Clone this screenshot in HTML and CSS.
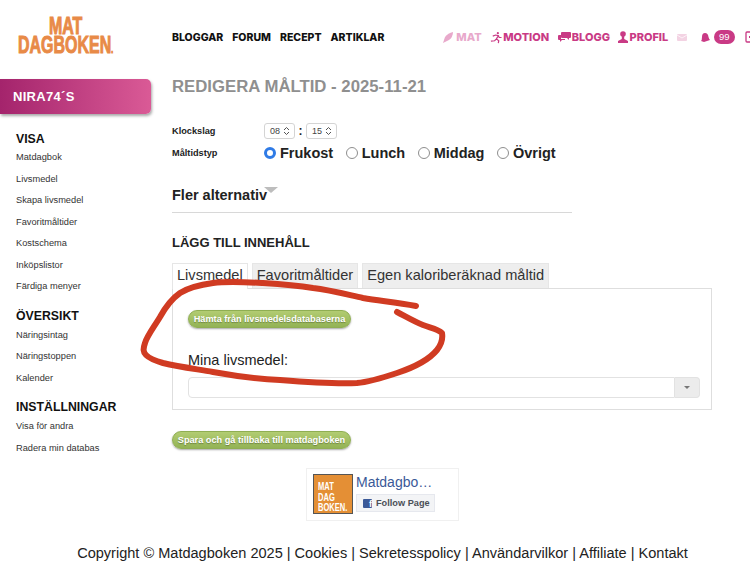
FILE: index.html
```html
<!DOCTYPE html>
<html lang="sv">
<head>
  <meta charset="UTF-8" />
  <meta name="viewport" content="width=device-width, initial-scale=1" />
  <title>Matdagboken - Redigera måltid</title>
  <link rel="stylesheet" href="styles.css">
</head>
<body>

  <div class="page">
    <div class="header">
      <div class="logo">
        <div class="logo-text">MAT<br>DAGBOKEN<span class="logo-dot">.</span></div>
      </div>
      <div class="main-nav">
        <a>BLOGGAR</a>
        <a>FORUM</a>
        <a>RECEPT</a>
        <a>ARTIKLAR</a>
      </div>
      <div class="user-nav">
        <a class="faded">
          <svg width="13" height="13" viewBox="0 0 13 13"><path d="M1 12 L3 6 Q6 2 11 1 Q11 6 7 9 Z" fill="currentColor"/></svg>MAT
        </a>
        <a>
          <svg width="12" height="13" viewBox="0 0 13 13" fill="none" stroke="currentColor" stroke-width="1.3"><circle cx="8.5" cy="1.8" r="1.2" fill="currentColor" stroke="none"/><path d="M3 5 L6 3.8 L9 4.5 L7 8 L9.5 10 L9 12.5 M7 8 L5 10 L1 10.5 M9 4.5 L10 6.5 L12.5 6.5"/></svg>MOTION
        </a>
        <a>
          <svg width="13" height="12" viewBox="0 0 13 12"><path d="M4 1 H12 Q13 1 13 2 V6 Q13 7 12 7 H11 L11 9 L9 7 H4 Q3 7 3 6 V2 Q3 1 4 1 Z" fill="currentColor"/><path d="M1 4 H3 V8 H7 V9 H4 L2 11 V9 H1 Q0 9 0 8 V5 Q0 4 1 4 Z" fill="currentColor"/></svg>BLOGG
        </a>
        <a>
          <svg width="10" height="12" viewBox="0 0 10 12"><circle cx="5" cy="3" r="2.8" fill="currentColor"/><path d="M3.8 5 H6.2 V8 L10 10 V12 H0 V10 L3.8 8 Z" fill="currentColor"/></svg>PROFIL
        </a>
        <svg class="mail-icon" width="10" height="7" viewBox="0 0 10 7"><rect width="10" height="7" rx="1" fill="#f3d3e3"/><path d="M0 1 L5 4 L10 1" fill="none" stroke="#fff" stroke-width="0.7"/></svg>
        <svg class="bell-icon" width="10" height="11" viewBox="0 0 10 11"><path d="M1 9 Q2 8 2 5 Q2 1 5 1 Q8 1 8.5 5 Q9 7 10 8 L4 10 Z" fill="#c93a85"/></svg>
        <span class="badge">99</span>
        <svg class="exit-icon" width="12" height="12" viewBox="0 0 12 12"><rect x="1" y="1" width="10" height="10" rx="1" fill="none" stroke="#c93a85" stroke-width="1.3"/><rect x="4" y="5" width="4" height="2" fill="#c93a85"/></svg>
      </div>
    </div>

    <div class="content">
      <div class="sidebar">
        <div class="user-band">NIRA74´S</div>
        <div class="side-menu">
          <h3>VISA</h3>
          <a>Matdagbok</a>
          <a>Livsmedel</a>
          <a>Skapa livsmedel</a>
          <a>Favoritmåltider</a>
          <a>Kostschema</a>
          <a>Inköpslistor</a>
          <a>Färdiga menyer</a>
          <h3>ÖVERSIKT</h3>
          <a>Näringsintag</a>
          <a>Näringstoppen</a>
          <a>Kalender</a>
          <h3>INSTÄLLNINGAR</h3>
          <a>Visa för andra</a>
          <a>Radera min databas</a>
        </div>
      </div>

      <div class="main">
        <h1>REDIGERA MÅLTID - 2025-11-21</h1>

        <div class="form-row time-row">
          <label class="row-label">Klockslag</label>
          <span class="time-box">08<svg width="7" height="10" viewBox="0 0 7 10" fill="none" stroke="#555" stroke-width="1"><path d="M1 4 L3.5 1.5 L6 4 M1 6 L3.5 8.5 L6 6"/></svg></span>
          <span class="time-sep">:</span>
          <span class="time-box">15<svg width="7" height="10" viewBox="0 0 7 10" fill="none" stroke="#555" stroke-width="1"><path d="M1 4 L3.5 1.5 L6 4 M1 6 L3.5 8.5 L6 6"/></svg></span>
        </div>

        <div class="form-row meal-row">
          <label class="row-label">Måltidstyp</label>
          <label class="radio"><input type="radio" name="meal" checked>Frukost</label>
          <label class="radio"><input type="radio" name="meal">Lunch</label>
          <label class="radio"><input type="radio" name="meal">Middag</label>
          <label class="radio"><input type="radio" name="meal">Övrigt</label>
        </div>

        <div class="more-options">
          <h2>Fler alternativ</h2><span class="more-arrow"></span>
        </div>

        <h4>LÄGG TILL INNEHÅLL</h4>

        <div class="tabs">
          <span class="tab active">Livsmedel</span>
          <span class="tab">Favoritmåltider</span>
          <span class="tab">Egen kaloriberäknad måltid</span>
        </div>
        <div class="tab-panel">
          <button class="green-btn small">Hämta från livsmedelsdatabaserna</button>
          <div class="field-label">Mina livsmedel:</div>
          <div class="combo">
            <div class="combo-input"></div>
            <div class="combo-btn"><span class="combo-arrow"></span></div>
          </div>
        </div>

        <button class="green-btn save">Spara och gå tillbaka till matdagboken</button>

        <div class="fb-wrap">
          <div class="fb-box">
            <div class="fb-logo"><div class="fb-logo-text">MAT<br>DAG<br>BOKEN.</div></div>
            <div class="fb-info">
              <div class="fb-name">Matdagbo…</div>
              <div class="fb-follow"><span class="fb-icon">f</span>Follow Page</div>
            </div>
          </div>
        </div>
      </div>
    </div>

    <div class="footer">Copyright © Matdagboken 2025 | Cookies | Sekretesspolicy | Användarvilkor | Affiliate | Kontakt</div>
  </div>

  <svg class="scribble" width="750" height="579" viewBox="0 0 750 579">
    <path d="M416 306 C395 302 380 301 363 298 C345 294 330 290 313 288 C295 285 280 284 263 283 C245 282 228 281 213 283 C198 285 188 288 180 293 C170 300 165 308 160 317 C154 327 147 336 145 343 C143 349 143 352 146 355 C150 359 156 361 163 363 C180 367 196 369 213 372 C235 376 258 379 280 380 C305 382 335 384 357 383 C370 382 382 378 397 373 C412 368 428 361 437 350 C441 345 443 339 442 333 C438 329 431 328 423 325 C413 321 405 316 397 312" fill="none" stroke="#d03b22" stroke-width="6" stroke-linecap="round" stroke-linejoin="round"/>
  </svg>

</body>
</html>
```

FILE: styles.css
```css
html, body {
  margin: 0;
  padding: 0;
  background-color: #fff;
  font-family: "Liberation Sans", Arial, sans-serif;
  color: #222;
  overflow: hidden;
}
.page {
  width: 750px;
  height: 579px;
  overflow: hidden;
}
.scribble {
  position: absolute;
  left: 0;
  top: 0;
  z-index: 5;
  pointer-events: none;
}

/* header */
.header {
  display: flex;
  align-items: flex-start;
  height: 79px;
}
.logo {
  width: 172px;
  flex: none;
  padding: 17px 0 0 18px;
  box-sizing: border-box;
}
.logo-text {
  font-size: 23.5px;
  font-weight: 700;
  line-height: 19px;
  color: #e88a47;
  width: 140px;
  text-align: center;
  white-space: nowrap;
  -webkit-text-stroke: 1px #e88a47;
  transform: scaleX(0.68);
  transform-origin: left top;
}
.logo-dot {
  font-size: 10px;
}
.main-nav {
  display: flex;
  gap: 9px;
  flex: none;
  padding-top: 31px;
}
.main-nav a {
  font-family: Inter, sans-serif;
  font-size: 10.5px;
  font-weight: 800;
  line-height: 14px;
  color: #111;
}
.user-nav {
  display: flex;
  align-items: center;
  flex: none;
  margin-left: 58px;
  padding-top: 29px;
  height: 16px;
  color: #c93a85;
}
.user-nav a {
  display: flex;
  align-items: center;
  gap: 1px;
  margin-right: 8.5px;
  font-family: Inter, sans-serif;
  font-size: 11px;
  font-weight: 800;
}
.user-nav a.faded {
  color: #e8a9cb;
}
.mail-icon {
  margin-right: 13px;
}
.bell-icon {
  margin-right: 4px;
}
.badge {
  width: 21px;
  height: 14px;
  border-radius: 7px;
  background: #c93a85;
  color: #fff;
  font-size: 9.5px;
  line-height: 14px;
  text-align: center;
  margin-right: 10px;
}
.exit-icon {
  flex: none;
}

/* sidebar */
.content {
  display: flex;
  height: 442px;
}
.sidebar {
  width: 172px;
  flex: none;
}
.user-band {
  width: 151px;
  height: 35px;
  box-sizing: border-box;
  padding-left: 13px;
  line-height: 35px;
  font-size: 13px;
  font-weight: 700;
  color: #fff;
  letter-spacing: 0.3px;
  background: linear-gradient(to right, #a4246c, #da5a96);
  border-radius: 0 5px 5px 0;
  box-shadow: 1px 2px 3px rgba(0, 0, 0, 0.35);
}
.side-menu {
  padding: 17px 0 0 16px;
}
.side-menu h3 {
  margin: 0;
  font-size: 12.3px;
  line-height: 16px;
  color: #111;
}
.side-menu h3 ~ h3 {
  margin-top: 15.5px;
}
.side-menu a {
  display: block;
  font-size: 9.25px;
  line-height: 12px;
  color: #333;
  margin-bottom: 9.5px;
  margin-top: 0;
}
.side-menu h3 + a {
  margin-top: 4px;
}
.side-menu h3 ~ h3 + a {
  margin-top: 5px;
}

/* main column */
.main {
  flex: 1;
  min-width: 0;
}
h1 {
  margin: 0;
  font-size: 16.75px;
  line-height: 15px;
  color: #8f8f8f;
}
.form-row {
  display: flex;
  align-items: center;
}
.row-label {
  width: 92px;
  flex: none;
  font-size: 9.2px;
  font-weight: 700;
  color: #222;
}
.time-row {
  margin-top: 28px;
  height: 17px;
}
.time-box {
  display: inline-flex;
  align-items: center;
  gap: 3px;
  height: 14px;
  padding: 0 4px 0 5px;
  border: 1px solid #d4d4d4;
  border-radius: 3px;
  font-size: 9px;
  color: #444;
}
.time-sep {
  width: 11px;
  text-align: center;
  font-size: 12px;
  font-weight: 700;
}
.meal-row {
  margin-top: 5px;
  height: 17px;
}
.radio {
  display: flex;
  align-items: center;
  gap: 4px;
  margin-right: 12.5px;
  font-size: 14.5px;
  font-weight: 700;
  color: #222;
}
.radio input {
  appearance: none;
  margin: 0;
  width: 12px;
  height: 12px;
  border: 1px solid #8e8e8e;
  border-radius: 50%;
  background: #fff;
  box-sizing: border-box;
}
.radio input:checked {
  border: 3.5px solid #2f7be6;
}
.more-options {
  display: flex;
  width: 400px;
  height: 25px;
  margin-top: 25px;
  padding-top: 1px;
  box-sizing: content-box;
  border-bottom: 1px solid #d8d8d8;
}
.more-options h2 {
  margin: 0;
  font-size: 14.5px;
  line-height: 17px;
  color: #222;
}
.more-arrow {
  width: 0;
  height: 0;
  margin: 0 0 0 -3px;
  border-left: 7px solid transparent;
  border-right: 7px solid transparent;
  border-top: 6px solid #bdbdbd;
}
h4 {
  margin: 22px 0 0;
  font-size: 13px;
  line-height: 15px;
  color: #222;
}

/* tabs */
.tabs {
  display: flex;
  gap: 4px;
  margin-top: 13px;
  position: relative;
  z-index: 1;
}
.tab {
  height: 24px;
  padding: 0 4px;
  line-height: 22px;
  font-size: 14.6px;
  color: #333;
  background: #eee;
  border: 1px solid #e6e6e6;
  border-bottom: none;
}
.tab.active {
  background: #fff;
  height: 25px;
  margin-bottom: -1px;
}
.tab-panel {
  width: 540px;
  height: 122px;
  box-sizing: border-box;
  border: 1px solid #dedede;
  padding: 21px 11px 0 15px;
}
.green-btn {
  display: block;
  height: 18px;
  padding: 0;
  border: 1px solid #8fae52;
  border-radius: 9px;
  background: linear-gradient(#b2cc72, #93b355);
  color: #fff;
  font-family: "Liberation Sans", Arial, sans-serif;
  font-size: 9.2px;
  font-weight: 700;
  white-space: nowrap;
  text-shadow: 0 1px 1px rgba(0, 0, 0, 0.3);
  box-shadow: 0 1px 2px rgba(0, 0, 0, 0.35);
}
.green-btn.small {
  width: 163px;
}
.green-btn.save {
  width: 179px;
  margin-top: 21px;
}
.field-label {
  margin-top: 24px;
  font-size: 14.5px;
  line-height: 17px;
  color: #222;
}
.combo {
  display: flex;
  height: 21px;
  margin-top: 8px;
}
.combo-input {
  flex: 1;
  border: 1px solid #e2e2e2;
  border-radius: 4px 0 0 4px;
}
.combo-btn {
  width: 24px;
  display: flex;
  align-items: center;
  justify-content: center;
  background: #ececec;
  border: 1px solid #e2e2e2;
  border-left: none;
  border-radius: 0 4px 4px 0;
}
.combo-arrow {
  width: 0;
  height: 0;
  border-left: 3px solid transparent;
  border-right: 3px solid transparent;
  border-top: 3px solid #777;
}

/* facebook box */
.fb-wrap {
  margin-top: 19px;
  padding-left: 134px;
}
.fb-box {
  display: flex;
  gap: 3px;
  width: 153px;
  height: 53px;
  box-sizing: border-box;
  padding: 5px 6px;
  border: 1px solid #f0f0f0;
}
.fb-logo {
  width: 40px;
  height: 40px;
  flex: none;
  box-sizing: border-box;
  padding: 6px 0 0 4px;
  background: #e48f35;
  border: 1px solid #555;
}
.fb-logo-text {
  color: #fff;
  font-size: 10.5px;
  font-weight: 700;
  line-height: 10.5px;
  white-space: nowrap;
  transform: scaleX(0.72);
  transform-origin: left top;
}
.fb-name {
  font-size: 14px;
  line-height: 16px;
  color: #3b5998;
}
.fb-follow {
  display: flex;
  align-items: center;
  gap: 4px;
  width: 79px;
  height: 18px;
  margin-top: 4px;
  box-sizing: border-box;
  padding-left: 6px;
  background: #f3f4f6;
  border: 1px solid #e6e8ee;
  font-size: 9.2px;
  font-weight: 700;
  color: #4b4f56;
}
.fb-icon {
  width: 9px;
  height: 9px;
  background: #3b5998;
  color: #fff;
  font-size: 9px;
  line-height: 10px;
  text-align: right;
  border-radius: 1px;
}

/* footer */
.footer {
  margin-top: 23px;
  padding-left: 15px;
  text-align: center;
  font-size: 14.55px;
  line-height: 18px;
  color: #222;
}
```
